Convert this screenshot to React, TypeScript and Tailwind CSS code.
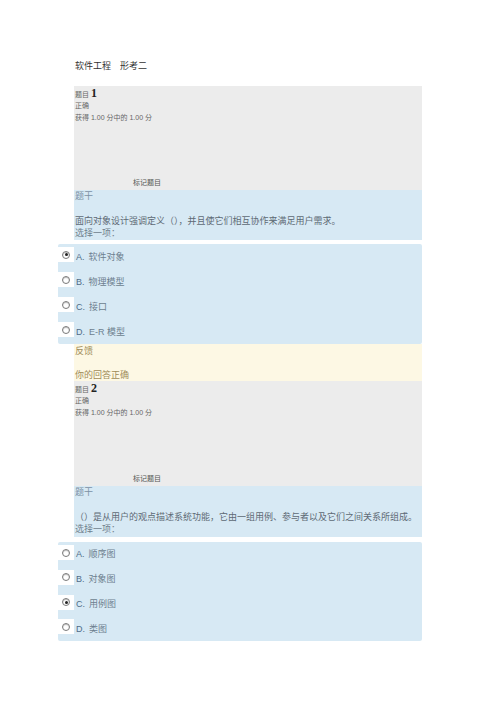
import React from 'react'

const font = "font-['Liberation_Sans','Noto_Sans_CJK_SC',sans-serif]"

type Question = {
  no: number
  stem: string
  options: string[]
  picked: number
  grayH: string
  blueH: string
  gap: string
  optH: string
  feedback?: boolean
}

const questions: Question[] = [
  {
    no: 1,
    stem: '面向对象设计强调定义（），并且使它们相互协作来满足用户需求。',
    options: ['软件对象', '物理模型', '接口', 'E-R 模型'],
    picked: 0,
    grayH: 'h-[104px]',
    blueH: 'h-[50px]',
    gap: 'h-[4px]',
    optH: 'h-[100px]',
    feedback: true,
  },
  {
    no: 2,
    stem: '（）是从用户的观点描述系统功能，它由一组用例、参与者以及它们之间关系所组成。',
    options: ['顺序图', '对象图', '用例图', '类图'],
    picked: 2,
    grayH: 'h-[105px]',
    blueH: 'h-[51px]',
    gap: 'h-[5px]',
    optH: 'h-[99px]',
  },
]

function Radio({ checked }: { checked: boolean }) {
  return (
    <div className="w-[16px] h-[15px] bg-white self-start mt-[3px] flex items-center justify-center shrink-0">
      <div className="w-[8px] h-[8px] rounded-full border border-[#7a7a7a] bg-white flex items-center justify-center shadow-[inset_0_1px_1px_rgba(0,0,0,0.25)]">
        {checked && <div className="w-[3px] h-[3px] rounded-full bg-[#222]" />}
      </div>
    </div>
  )
}

function QuestionBlock({ q }: { q: Question }) {
  return (
    <div className="flex flex-col">
      <div className={`${q.grayH} bg-[#ececec] flex flex-col pl-[1px] text-[#666]`}>
        <div className="h-[14px] flex items-end gap-[2px]">
          <span className="text-[7px] leading-[11px]">题目</span>
          <span className="text-[12px] leading-[14px] font-bold text-[#222] font-['Liberation_Serif',serif]">{q.no}</span>
        </div>
        <div className="h-[12px] text-[7px] leading-[12px]">正确</div>
        <div className="h-[12px] text-[7px] leading-[12px]">获得 1.00 分中的 1.00 分</div>
        <div className="flex-1" />
        <div className="h-[12px] text-[7px] leading-[12px] ml-[58px] mb-[1px] text-[#555]">标记题目</div>
      </div>
      <div className={`${q.blueH} bg-[#d7e9f4] pl-[1px] flex flex-col`}>
        <div className="h-[12px] text-[9px] leading-[12px] text-[#7b91a5]">题干</div>
        <div className="mt-[13px] text-[9px] leading-[12px] text-[#5e6a74] whitespace-nowrap">{q.stem}</div>
        <div className="text-[9px] leading-[12px] text-[#6f7f8c]">选择一项：</div>
      </div>
      <div className={q.gap} />
      <div className={`${q.optH} bg-[#d7e9f4] -ml-[16px] flex flex-col rounded-[2px]`}>
        {q.options.map((o, i) => (
          <div key={i} className="h-[25px] flex items-center">
            <Radio checked={i === q.picked} />
            <span className="ml-[2px] text-[9px] leading-[12px] text-[#4f6c88]">
              {String.fromCharCode(65 + i)}.
            </span>
            <span className="ml-[4px] text-[9px] leading-[12px] text-[#6d7f8f]">{o}</span>
          </div>
        ))}
      </div>
      {q.feedback && (
        <div className="h-[37px] bg-[#fdf8e4] pl-[1px] flex flex-col justify-between text-[9px] leading-[12px] text-[#a08c58]">
          <div className="mt-[1px]">反馈</div>
          <div>你的回答正确</div>
        </div>
      )}
    </div>
  )
}

export default function App() {
  return (
    <div className={`w-[496px] h-[702px] bg-white ${font}`}>
      <div className="pl-[74px] pt-[60px] w-[422px] box-content">
        <div className="h-[26px] text-[9px] leading-[12px] text-[#333] pl-[1px]">
          软件工程　形考二
        </div>
        <div className="w-[348px] flex flex-col">
          {questions.map(q => (
            <QuestionBlock key={q.no} q={q} />
          ))}
        </div>
      </div>
    </div>
  )
}
